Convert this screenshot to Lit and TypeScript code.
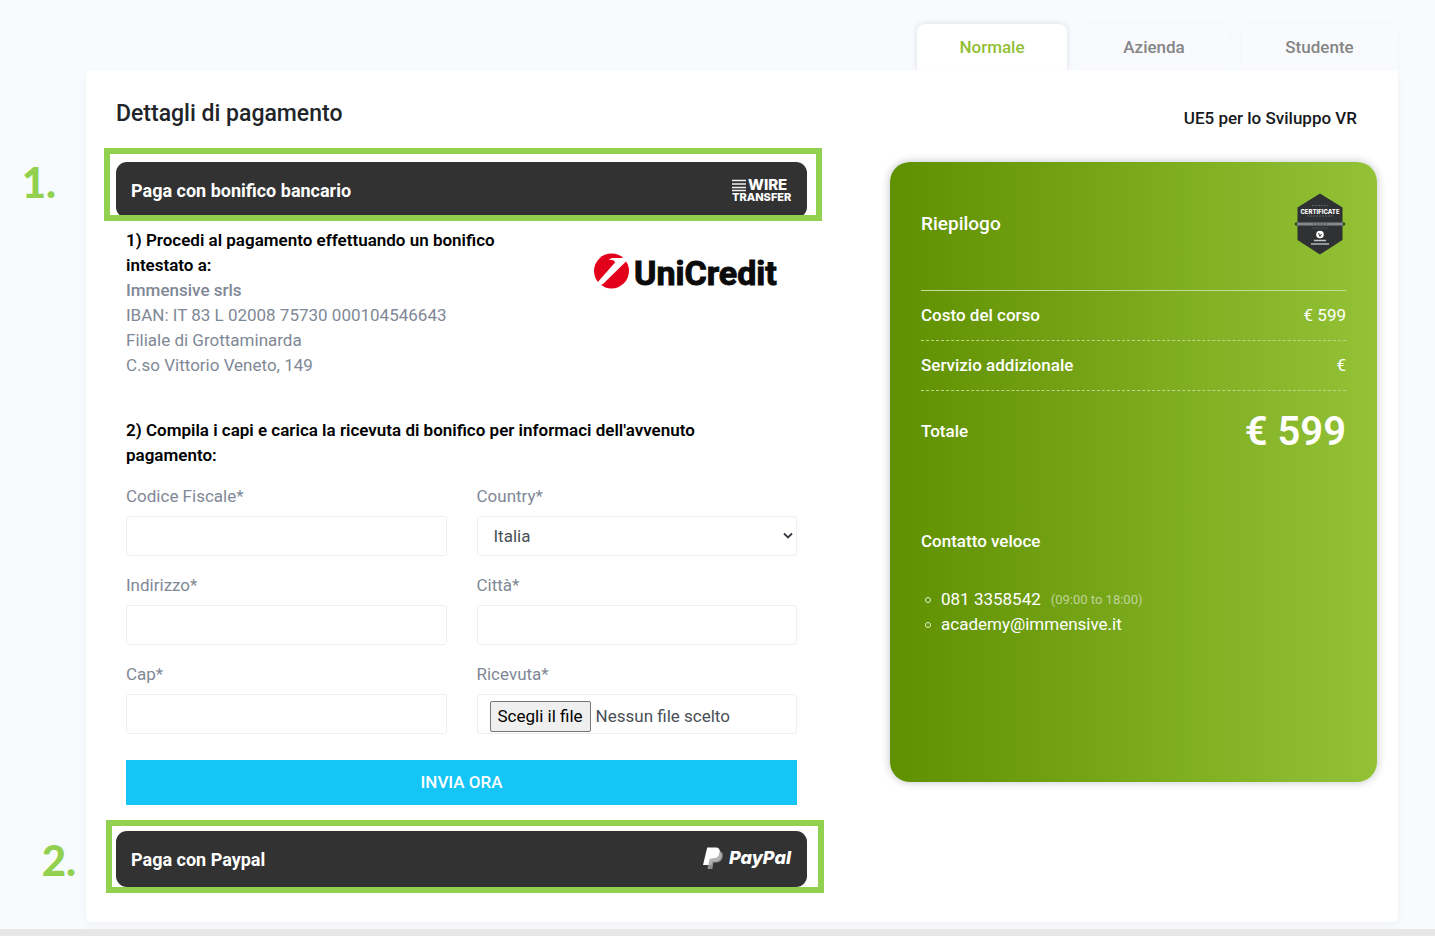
import { LitElement, html, css, svg } from "lit";
import { customElement, state } from "lit/decorators.js";

const wireLogo = svg`
  <svg class="logo" width="64" height="26" viewBox="0 0 64 26" role="img" aria-label="Wire Transfer">
    <path d="M3 3.500H17M3 7H17M3 10.500H17M3 13.500H17" stroke="#f2f2f2" stroke-width="1.700" />
    <text x="19" y="13" class="wire-top">WIRE</text>
    <text x="3" y="24" class="wire-bottom">TRANSFER</text>
  </svg>`;

const paypalLogo = svg`
  <svg class="logo" width="90" height="26" viewBox="0 0 90 26" role="img" aria-label="PayPal">
    <path d="M7 5h8.500c3.500 0 5 2.500 4.200 6-.8 3.800-3.500 5.500-7 5.500H10.500L9.300 23H4.500z" fill="#8d8d8d" />
    <path d="M4.200 1.500h8c3.600 0 5.300 2 4.500 5.500-.8 3.900-3.600 5.700-7.200 5.700H6.800L5.500 19H0z" fill="#fff" />
    <path d="M7.200 12.700h2.600c3.600 0 6.200-1.900 6.900-5.700l.1-1c1.400.8 1.900 2.400 1.400 4.700-.7 3.300-3 4.800-6.200 4.800H9.300L8.200 19H5.800z" fill="#b4b4b4" />
    <text x="26" y="18" class="paypal-word">PayPal</text>
  </svg>`;

const unicreditLogo = svg`
  <svg class="bank" width="190" height="44" viewBox="0 0 190 44" role="img" aria-label="UniCredit">
    <circle cx="18.500" cy="22" r="17.500" fill="#e2001a" />
    <path d="M15.500 10.500 19.500 9 31.500 9 34 11.500 10 35 5.500 37 3.500 34.500 22 13.500 21 11.500z" fill="#fff" />
    <text x="41" y="36" class="bank-word">UniCredit</text>
  </svg>`;

const badge = svg`
  <svg class="badge" width="52" height="64" viewBox="0 0 52 64" role="img" aria-label="Certificate">
    <circle cx="2.500" cy="32" r="1.800" fill="#2b4a12" />
    <circle cx="49.500" cy="32" r="1.800" fill="#2b4a12" />
    <path d="M26 1.500 48.500 15.500V48L26 62.500 3.500 48V15.500z" fill="#2f3133" />
    <path d="M18 13.500H34M13 24H39" stroke="#626465" stroke-width="1" stroke-dasharray="2 1" />
    <text x="26" y="21.500" class="badge-word">CERTIFICATE</text>
    <rect x="3" y="30.500" width="46" height="3" fill="#85878a" />
    <path d="M19 32H33" stroke="#55575a" stroke-width="1" stroke-dasharray="2 1" />
    <path d="M18 36H34" stroke="#58595b" stroke-width=".7" />
    <circle cx="26" cy="42.500" r="3.800" fill="#fff" />
    <path d="M24.500 41 26 44.500 27.500 42" fill="none" stroke="#2f3133" stroke-width="1" />
    <path d="M20 48.500H32" stroke="#c4c5c6" stroke-width="1.500" />
    <path d="M17 52H35" stroke="#9fa0a1" stroke-width="1.800" />
  </svg>`;

@customElement("app-root")
export class AppRoot extends LitElement {
  @state() private tab = "Normale";
  @state() private fileName = "Nessun file scelto";

  static styles = css`
    :host {
      display: block;
      min-height: 100vh;
      box-sizing: border-box;
      background: #f8fbfe;
      border-bottom: 7px solid #e6e6e6;
      padding: 24px 37px 7px 86px;
      font: 400 17px/25px Roboto, "Open Sans", sans-serif;
      color: #7f8896;
    }
    *, *::before { box-sizing: border-box; }
    h1, h2, h3, p, ul, dl, dd { margin: 0; padding: 0; font-weight: 500; }
    .tabs { display: flex; justify-content: flex-end; gap: 12px; height: 46px; }
    .tab {
      min-width: 150px; border: 0; border-radius: 8px 8px 0 0; padding: 0;
      background: #f9fafd; color: #858585; font: 500 17px/25px Roboto, sans-serif;
      box-shadow: 0 0 4px #f1f3f7;
    }
    .tab:last-child { min-width: 157px; }
    .tab.active { background: #fff; color: #92bf36; box-shadow: 0 0 6px #d9dce2; }
    .card {
      position: relative;
      display: grid; grid-template-columns: 691fr 487fr; column-gap: 83px;
      background: #fff; border-radius: 0 0 5px 5px; padding: 29px 21px 35px 30px;
      box-shadow: 0 4px 8px #f1f2f7;
    }
    .title { font-size: 23px; line-height: 30px; height: 63px; color: #212529; }
    .course { height: 63px; padding: 7px 20px 0 0; text-align: right; color: #16181b; font-size: 17px; line-height: 25px; }
    .bar {
      display: flex; justify-content: space-between; align-items: center; width: 100%; height: 56px;
      border: 0; border-radius: 11px; background: #323232; color: #fff; padding: 0 14px 0 15px;
      font: 700 18px/25px Roboto, sans-serif; text-align: left;
    }
    .step { position: relative; }
    .mark { position: absolute; inset: -14px -15px -3px -12px; border: 6px solid #92d050; pointer-events: none; }
    .mark.second { inset: -11px -17px -6px -10px; }
    .number { position: absolute; top: 0; right: 100%; margin-right: 60px; color: #92d050; font: 900 42px/40px Lato, sans-serif; }
    .number.second { top: 9px; margin-right: 40px; }
    .body { padding: 10px 10px 26px; }
    .transfer { display: grid; grid-template-columns: 1fr 204px; column-gap: 50px; }
    .lead { color: #000; font-weight: 600; }
    .holder { font-weight: 500; }
    .bank { display: block; margin: 21px 0 0 0; overflow: visible; }
    .second-lead { margin-top: 40px; padding-right: 40px; }
    .address { font-weight: 400; }
    form { display: grid; grid-template-columns: 1fr 1fr; column-gap: 30px; row-gap: 17px; margin-top: 16px; }
    .field { display: flex; flex-direction: column; gap: 7px; }
    .control {
      width: 100%; height: 40px; border: 1px solid #eeeff1; border-radius: 3px; background: #fff;
      padding: 0 12px; color: #495057; font: 400 17px/25px Roboto, sans-serif;
    }
    .select { position: relative; display: block; }
    select.control { appearance: none; padding-left: 16px; }
    .chevron { position: absolute; right: 4px; top: 16px; pointer-events: none; }
    .file { position: relative; display: flex; align-items: center; gap: 5px; padding-top: 4px; }
    .file input { position: absolute; inset: 0; width: 100%; opacity: 0; }
    .pick { border: 1px solid #767676; border-radius: 2px; background: #efefef; color: #000; padding: 2px 7px; }
    .send {
      grid-column: 1 / -1; height: 45px; margin-top: 9px; border: 0; background: #15c5f6; color: #fff;
      font: 500 17px/25px Roboto, sans-serif;
    }
    .logo, .badge { display: block; flex: none; overflow: visible; }
    .logo text { fill: #fff; }
    .wire-top { font: 800 15px Inter, sans-serif; }
    .wire-bottom { font: 800 11px Inter, sans-serif; }
    .paypal-word { font: italic 800 18px Inter, sans-serif; }
    .bank-word { font: 700 34px Roboto, sans-serif; fill: #0b0b0b; stroke: #0b0b0b; stroke-width: 1px; }
    .badge-word { font: 800 6px Inter, sans-serif; fill: #fff; text-anchor: middle; }
    .summary {
      align-self: start; min-height: 620px; border-radius: 20px; padding: 30px 31px;
      background: linear-gradient(90deg, #5f9000, #94c237); color: #fff;
      box-shadow: 0 0 10px #bfc2c6;
    }
    .head { display: flex; justify-content: space-between; height: 99px; border-bottom: 1px solid #c5dc99; }
    .head h2 { font-size: 19px; line-height: 63px; }
    .row { display: flex; justify-content: space-between; align-items: center; height: 50px; border-bottom: 1px dashed #bcd68a; font-weight: 500; }
    .row dd { font-weight: 400; }
    .row.total { height: 80px; border: 0; }
    .row.total dd { font-size: 40px; font-weight: 600; }
    .contact { font-size: 17px; line-height: 25px; margin-top: 58px; }
    .contacts { list-style: none; margin-top: 33px; font-weight: 400; }
    .contacts li { display: flex; align-items: center; gap: 10px; }
    .contacts li::before { content: ""; width: 6px; height: 6px; margin-left: 4px; border: 1px solid #e3efcf; border-radius: 50%; }
    .contacts a { color: #fff; text-decoration: none; }
    .hours { font-size: 13px; color: #bfd398; }
  `;

  private field(id: string, label: string) {
    return html`<div class="field"><label for=${id}>${label}*</label><input class="control" id=${id} type="text" /></div>`;
  }

  private onFile(e: Event) {
    this.fileName = (e.target as HTMLInputElement).files?.[0]?.name ?? "Nessun file scelto";
  }

  render() {
    return html`
      <nav class="tabs">
        ${["Normale", "Azienda", "Studente"].map(
          (t) => html`<button class="tab ${t === this.tab ? "active" : ""}" @click=${() => (this.tab = t)}>${t}</button>`
        )}
      </nav>
      <main class="card">
        <section>
          <h1 class="title">Dettagli di pagamento</h1>
          <div class="step">
            <button class="bar"><span>Paga con bonifico bancario</span>${wireLogo}</button>
            <span class="mark"></span><span class="number">1.</span>
          </div>
          <div class="body">
            <div class="transfer">
              <div>
                <p class="lead">1) Procedi al pagamento effettuando un bonifico intestato a:</p>
                <p class="holder">Immensive srls</p>
                <p class="address">IBAN: IT 83 L 02008 75730 000104546643<br />Filiale di Grottaminarda<br />C.so Vittorio Veneto, 149</p>
              </div>
              ${unicreditLogo}
            </div>
            <p class="lead second-lead">2) Compila i capi e carica la ricevuta di bonifico per informaci dell'avvenuto pagamento:</p>
            <form @submit=${(e: Event) => e.preventDefault()}>
              ${this.field("cf", "Codice Fiscale")}
              <div class="field">
                <label for="country">Country*</label>
                <span class="select">
                  <select class="control" id="country"><option>Italia</option></select>
                  <svg class="chevron" width="10" height="8" viewBox="0 0 10 8"><path d="M1 1.500 5 5.500 9 1.500" fill="none" stroke="#343a40" stroke-width="1.800" /></svg>
                </span>
              </div>
              ${this.field("address", "Indirizzo")}
              ${this.field("city", "Città")}
              ${this.field("cap", "Cap")}
              <div class="field">
                <label for="receipt">Ricevuta*</label>
                <div class="control file">
                  <span class="pick">Scegli il file</span><span>${this.fileName}</span>
                  <input id="receipt" type="file" @change=${this.onFile} />
                </div>
              </div>
              <button class="send">INVIA ORA</button>
            </form>
          </div>
          <div class="step">
            <button class="bar"><span>Paga con Paypal</span>${paypalLogo}</button>
            <span class="mark second"></span><span class="number second">2.</span>
          </div>
        </section>
        <section>
          <h2 class="course">UE5 per lo Sviluppo VR</h2>
          <div class="summary">
            <div class="head"><h2>Riepilogo</h2>${badge}</div>
            <dl>
              <div class="row"><dt>Costo del corso</dt><dd>€ 599</dd></div>
              <div class="row"><dt>Servizio addizionale</dt><dd>€</dd></div>
              <div class="row total"><dt>Totale</dt><dd>€ 599</dd></div>
            </dl>
            <h3 class="contact">Contatto veloce</h3>
            <ul class="contacts">
              <li><a href="tel:0813358542">081 3358542</a><span class="hours">(09:00 to 18:00)</span></li>
              <li><a href="mailto:academy@immensive.it">academy@immensive.it</a></li>
            </ul>
          </div>
        </section>
      </main>
    `;
  }
}
